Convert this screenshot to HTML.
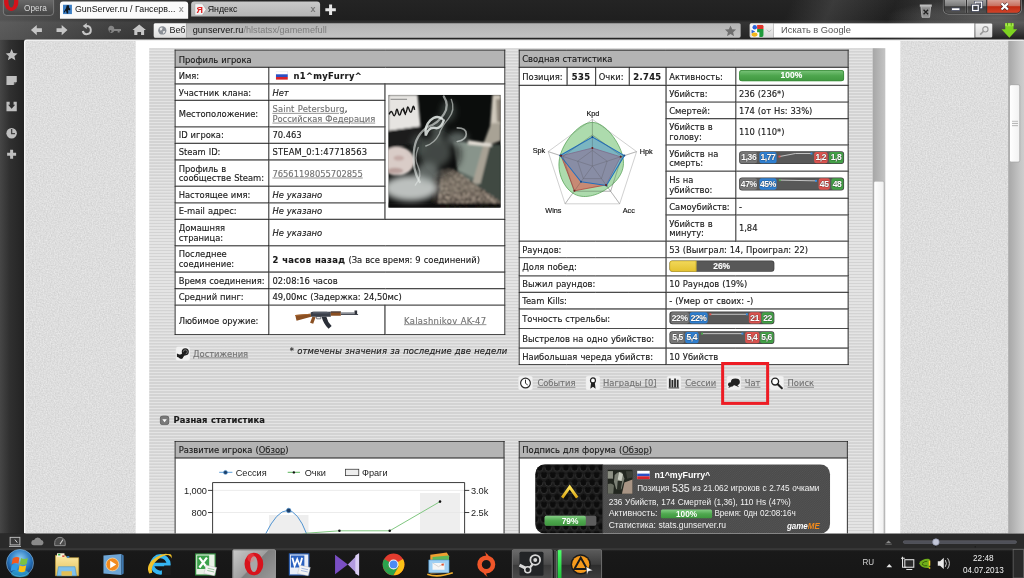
<!DOCTYPE html>
<html lang="ru">
<head>
<meta charset="utf-8">
<title>GunServer.ru / Гансервер</title>
<style>
html,body{margin:0;padding:0;width:1024px;height:578px;overflow:hidden;background:#1b1b1b;}
#root{position:absolute;left:0;top:0;width:1366px;height:768px;transform:scale(0.74963,0.7526);transform-origin:0 0;overflow:hidden;
  font-family:"Liberation Sans",sans-serif;color:#222;background:#1d1d1d;}
#root *{box-sizing:border-box;}
.abs{position:absolute;}
/* ---------- browser chrome ---------- */
#chrome{left:0;top:0;width:1366px;height:54px;background:radial-gradient(ellipse 150px 26px at 1330px 24px,rgba(150,150,150,.55),rgba(0,0,0,0)),linear-gradient(90deg,rgba(120,120,120,.6) 0,rgba(90,90,90,.4) 150px,rgba(0,0,0,0) 340px),linear-gradient(115deg,rgba(0,0,0,0) 0,rgba(0,0,0,0) 76%,rgba(120,120,120,.28) 80%,rgba(0,0,0,0) 86%,rgba(120,120,120,.2) 90%,rgba(0,0,0,0) 95%),linear-gradient(#242424 0,#1f1f1f 26px,#343434 30px,#242424 53px);}
#operabtn{left:4px;top:-2px;width:68px;height:23px;border:1px solid #8a8a8a;border-radius:0 0 5px 5px;background:linear-gradient(#6a6a6a,#444);color:#d8d8d8;font-size:11px;line-height:23px;padding-left:27px;}
.tab{top:1.700px;height:22px;border-radius:4px 4px 0 0;font-size:11.800px;line-height:20px;color:#111;white-space:nowrap;overflow:hidden;}
#tab1{left:80px;width:171px;background:#fbfbfb;padding-left:20px;height:23.300px;}
#tab2{left:255px;width:172px;background:linear-gradient(#c9c9c9,#b3b3b3);padding-left:22px;height:20px;line-height:20px;}
.tabx{right:6px;top:0;color:#999;font-size:12px;font-weight:bold;}
#addr{left:205px;top:31px;width:783px;height:19px;background:linear-gradient(#b4b4b4,#c3c3c3);border-radius:2px;font-size:12px;line-height:18px;white-space:nowrap;}
#web{left:0;top:0;width:44px;height:19px;background:linear-gradient(#fafafa,#dedede);border-radius:2px 0 0 2px;border-right:1px solid #999;padding-left:21px;color:#222;}
#search{left:1031.500px;top:31px;width:268.500px;height:19px;background:#fff;font-size:12.400px;line-height:18px;color:#555;padding-left:10.500px;}
#gbox{left:999.500px;top:31px;width:32px;height:19px;background:linear-gradient(#f4f4f4,#d8d8d8);border-radius:2px 0 0 2px;}
#sbtn{left:1300px;top:31px;width:24px;height:19px;background:linear-gradient(#f4f4f4,#d4d4d4);border-left:1px solid #aaa;border-radius:0 2px 2px 0;}
#winctl{left:1259px;top:-2px;width:103px;height:19.500px;border:1px solid #1e1e1e;border-radius:0 0 6px 6px;overflow:hidden;box-shadow:0 0 0 1.200px rgba(200,200,200,.5);}
#winctl div{position:absolute;top:0;height:18.500px;}
/* ---------- sidebar ---------- */
#side{left:0;top:53px;width:33px;height:656px;background:linear-gradient(90deg,#464646 0,#303030 13px,#222 33px);}
/* ---------- page ---------- */
#page{left:31.500px;top:52px;width:1335px;height:657px;background:#dedede;border-top:2px solid #f6f6f6;border-left:2px solid #f6f6f6;overflow:hidden;border-radius:4px 3px 0 0;}
#col{left:147.500px;top:0;width:1020px;height:660px;background:#fff;}
#stripes{left:18px;top:10px;width:965px;height:660px;background:repeating-linear-gradient(#d3d3d3 0,#d3d3d3 1.6px,#e4e4e4 2px,#e4e4e4 3.6px,#d3d3d3 4px);}
#isb{left:983px;top:10px;width:17px;height:660px;background:linear-gradient(90deg,#a6a6a6,#c4c4c4);}
#isbthumb{left:1px;top:176px;width:15px;height:500px;background:linear-gradient(90deg,#fff,#f0f0f0);border:1px solid #b0b0b0;border-radius:3px;}
#osb{left:1311.500px;top:0;width:22px;height:660px;background:linear-gradient(90deg,#a6a6a6,#c6c6c6 16px,#cfcfcf 22px);}
#osbthumb{left:1px;top:58px;width:15px;height:104px;background:linear-gradient(90deg,#fff,#f2f2f2);border:1px solid #aaa;border-radius:3px;}
/* ---------- content ---------- */
#content{font-family:"DejaVu Sans","Liberation Sans",sans-serif;font-size:11.2px;line-height:13px;color:#1a1a1a;letter-spacing:-0.03px;word-spacing:.5px;-webkit-text-stroke-width:.18px;}
table.t{position:absolute;border-collapse:collapse;table-layout:fixed;background:#fff;}
table.t td{border:1px solid #111;box-shadow:inset 0 0 0 .3px #333;padding:2px 4px 0 4px;vertical-align:middle;overflow:hidden;}
table.t td.bc{padding:0 4px 1px 4px;}
table.t td.h{background:#b4b4b4;height:23px;padding-top:3.500px;}
a{color:#737373;text-decoration:underline;}
i{font-style:italic;}
#content b{letter-spacing:.45px;}
.bar{position:relative;width:140px;height:16px;border-radius:4px;background:#585858;overflow:hidden;color:#fff;font:bold 11.3px/15px "Liberation Sans",sans-serif;text-align:center;box-shadow:inset 0 0 0 1px rgba(0,0,0,.25);}
.bar span{position:absolute;top:1px;height:14px;border-radius:3px;text-align:center;letter-spacing:-0.5px;text-shadow:0 0 1.5px rgba(0,0,0,.9),0 0 1px rgba(0,0,0,.6);}
.g{background:#777;}.b{background:#2f7fd0;}.r{background:#d9534f;}.gr{background:#43a047;}
.lnk{position:absolute;white-space:nowrap;}
/* ---------- status + taskbar ---------- */
#status{left:0;top:709px;width:1366px;height:20px;background:#2a2a2a;}
#task{left:0;top:729px;width:1366px;height:39px;background:linear-gradient(#2c2c2c 0,#191919 3px,#161616 100%);border-top:1px solid #555;}
</style>
</head>
<body>
<div id="root">

<!-- ======================= BROWSER CHROME ======================= -->
<div id="chrome" class="abs">
  <div id="operabtn" class="abs">Opera</div>
  <svg class="abs" style="left:5px;top:0" width="20" height="19" viewBox="0 0 20 19"><ellipse cx="10" cy="2.5" rx="9.6" ry="12" fill="#d3121a"/><ellipse cx="10" cy="1.5" rx="3.8" ry="8.5" fill="#4a4a4a"/></svg>
  <div id="tab1" class="tab abs">GunServer.ru / Гансерв...<span class="tabx abs">x</span></div>
  <svg class="abs" style="left:84px;top:6px" width="12" height="13" viewBox="0 0 12 13"><rect width="12" height="13" fill="#3d7fc4"/><path d="M5 1h3v3l2 2-1 2-2-1v5h-2l-1-4-2 3-1-1 3-5z" fill="#101820"/></svg>
  <div id="tab2" class="tab abs">Яндекс<span class="tabx abs" style="color:#777">x</span></div>
  <svg class="abs" style="left:259px;top:5px" width="17" height="15" viewBox="0 0 17 15"><path d="M1 0h10l5 7.5-5 7.5H1z" fill="#f4f4f4" stroke="#999" stroke-width=".6"/><text x="3" y="12" font-family="Liberation Sans, sans-serif" font-weight="bold" font-size="12" fill="#e02020">Я</text></svg>
  <svg class="abs" style="left:432px;top:4px" width="18" height="18" viewBox="0 0 18 18"><path d="M9 2v14M2 9h14" stroke="#e6e6e6" stroke-width="4"/></svg>
  <!-- nav buttons -->
  <svg class="abs" style="left:34px;top:29px" width="170" height="22" viewBox="0 0 170 22">
    <g fill="#c6c6c6" stroke="none">
      <g transform="translate(14.6 11) scale(.86) translate(-14.5 -11)"><path d="M6 11l9-8v5h8v6h-8v5z"/></g>
      <g transform="translate(48.7 11) scale(.86) translate(-49.5 -11)"><path d="M58 11l-9-8v5h-8v6h8v5z"/></g>
      <g transform="translate(81.7 11) scale(.9) translate(-82 -11)"><path d="M82 3.5a7.500 7.500 0 1 1-7.300 9.200l3-.7a4.500 4.500 0 1 0 4.300-5.500v3l-6-4.500 6-4.500z"/></g>
      <g transform="translate(117 11) scale(.9) translate(-117 -11)"><path d="M110 11a4.500 4.500 0 1 1 8.600-1.500h10v3h-2v2h-3v-2h-5a4.500 4.500 0 0 1-8.600-1.500zm3 0a1.500 1.500 0 1 0 .01 0z" fill="#858585"/></g>
      <g transform="translate(151.7 11) scale(.82) translate(-151 -11)"><path d="M151 2l11 9h-3v8h-5v-5h-6v5h-5v-8h-3z"/></g>
    </g>
  </svg>
  <div id="addr" class="abs">
    <div id="web" class="abs">Веб</div>
    <svg class="abs" style="left:5px;top:3px" width="13" height="13" viewBox="0 0 13 13"><circle cx="6.500" cy="6.500" r="5.500" fill="#8a8f96"/><path d="M3 4q2-2 4-1l-1 3-2 1zM7 8l3-1 0 2-2 2z" fill="#e8e8e8"/></svg>
    <span class="abs" style="left:52px;top:0;color:#151515;font-size:12.200px">gunserver.ru<span style="color:#7d7d7d">/hlstatsx/gamemefull</span></span>
    <svg class="abs" style="left:762px;top:3px" width="15" height="14" viewBox="0 0 17 16"><path d="M8.500 0l2.500 5.500 6 .6-4.500 4 1.300 5.900-5.300-3.100-5.300 3.100 1.300-5.900-4.500-4 6-.6z" fill="#6f6f6f"/></svg>
  </div>
  <div id="gbox" class="abs">
    <svg class="abs" style="left:2.500px;top:1.500px" width="29" height="16" viewBox="0 0 29 16"><rect width="16.500" height="16" rx="1.500" fill="#fdfdfd"/><circle cx="4.800" cy="3.200" r="3" fill="#2a62d9"/><path d="M.5 6.500l5 2.500-5 2.500z" fill="#2a62d9"/><path d="M8 0h6.500a2 2 0 0 1 2 2v3.500H8z" fill="#e0342a"/><path d="M8 5.500h8.500V14a2 2 0 0 1-2 2H11V10H8z" fill="#1f9b3c"/><ellipse cx="4.500" cy="13" rx="4" ry="2.800" fill="#f2b71c"/><path d="M21 6.500l3 3 3-3" stroke="#b5b5b5" stroke-width="1.200" fill="none"/></svg>
  </div>
  <div id="search" class="abs">Искать в Google</div>
  <div id="sbtn" class="abs"><svg class="abs" style="left:5px;top:3px" width="14" height="14" viewBox="0 0 14 14"><circle cx="8.500" cy="5" r="3.500" fill="none" stroke="#9a9a9a" stroke-width="1.600"/><path d="M6 7.500L1.500 12" stroke="#9a9a9a" stroke-width="2.200"/></svg></div>
  <svg class="abs" style="left:1335px;top:29px" width="23" height="22" viewBox="0 0 23 22"><path d="M6 2h11v8h5L11.500 21 1 10h5z" fill="#7ed321"/><path d="M6 2h11v4H6z" fill="#a6e84a"/><path d="M9 1v4M14 1v4" stroke="#3f8a00" stroke-width="1"/></svg>
  <!-- trash -->
  <svg class="abs" style="left:1225px;top:3px" width="20" height="21" viewBox="0 0 20 21"><path d="M2 3h16v3H2z" fill="#bdbdbd"/><path d="M3.500 6h13l-1.500 14h-10z" fill="#8e8e8e" stroke="#c4c4c4"/><path d="M7 10l6 6M13 10l-6 6" stroke="#222" stroke-width="1.800"/></svg>
  <div id="winctl" class="abs">
    <div style="left:0;width:30px;background:linear-gradient(#a4a4a4,#7a7a7a 46%,#3c3c3c 52%,#555 100%);border-right:1px solid #2a2a2a;box-shadow:inset -1px 0 0 rgba(255,255,255,.25)"></div>
    <div style="left:30px;width:27px;background:linear-gradient(#a4a4a4,#7a7a7a 46%,#3c3c3c 52%,#555 100%);border-right:1px solid #2a2a2a;box-shadow:inset 1px 0 0 rgba(255,255,255,.25)"></div>
    <div style="left:57px;width:48px;background:linear-gradient(#d9a79c,#c9705f 46%,#c02a12 52%,#d4472c 100%)"></div>
    <svg class="abs" style="left:0;top:0" width="105" height="19" viewBox="0 0 105 19"><rect x="9.500" y="11.500" width="11" height="3.600" fill="#fff" stroke="#3a3f55" stroke-width="1"/><rect x="37.500" y="8" width="7.500" height="7" fill="none" stroke="#3a3f55" stroke-width="3.400"/><rect x="37.500" y="8" width="7.500" height="7" fill="none" stroke="#fff" stroke-width="1.600"/><path d="M41 5.500V3.800h8.500v7.500h-2" fill="none" stroke="#3a3f55" stroke-width="3.200"/><path d="M41 5.500V3.800h8.500v7.500h-2" fill="none" stroke="#fff" stroke-width="1.500"/><path d="M76 5.500l8.500 8M84.500 5.500l-8.500 8" stroke="#4a2a2a" stroke-width="4.600"/><path d="M76 5.500l8.500 8M84.500 5.500l-8.500 8" stroke="#fff" stroke-width="2.800"/></svg>
  </div>
</div>

<!-- ======================= SIDEBAR ======================= -->
<div id="side" class="abs">
  <svg class="abs" style="left:4px;top:8px" width="24" height="160" viewBox="0 0 24 160" fill="#bfbfbf">
    <g transform="translate(11.500 12) scale(.86) translate(-11.500 -12)"><path d="M11.500 3l2.700 6 6.500.6-4.900 4.300 1.500 6.400-5.800-3.400-5.800 3.400 1.500-6.400L2.300 9.600l6.500-.6z"/></g>
    <g transform="translate(11.500 46) scale(.86) translate(-11.500 -46)"><path d="M3.500 39h16v9l-5 5h-11z"/><path d="M15 48.500h4l-4 4z" fill="#555"/></g>
    <g transform="translate(11.500 80.500) scale(.86) translate(-11.500 -80.500)"><path d="M3.500 73h5v5h-2.500l5.500 6 5.500-6h-2.500v-5h5v15h-16z"/></g>
    <circle cx="11.500" cy="116" r="7"/><path d="M11.500 110.500v6h4.500" stroke="#444" stroke-width="1.800" fill="none"/>
    <path d="M11.500 138v12M5.500 144h12" stroke="#bfbfbf" stroke-width="4"/>
  </svg>
</div>

<!-- ======================= PAGE ======================= -->
<div id="page" class="abs">
  <svg class="abs" style="left:0;top:0" width="1335" height="660"><filter id="nz" x="0" y="0" width="100%" height="100%" color-interpolation-filters="sRGB"><feTurbulence type="fractalNoise" baseFrequency="0.55" numOctaves="2" seed="3"/><feColorMatrix type="matrix" values=".14 0 0 0 .797  .14 0 0 0 .797  .14 0 0 0 .797  0 0 0 0 1"/></filter><rect width="1335" height="660" fill="#e0e0e0"/><rect width="1335" height="660" filter="url(#nz)"/></svg>
  <div id="col" class="abs">
    <div id="stripes" class="abs"></div>
    <div id="isb" class="abs"><div id="isbthumb" class="abs"></div></div>
    <div id="content" class="abs" style="left:0;top:0;width:1020px;height:660px">
<!--CONTENT-START-->
<table class="t" style="left:52.4px;top:12.4px;width:440px">
<colgroup><col style="width:125px"><col style="width:155px"><col style="width:160px"></colgroup>
<tr><td class="h" colspan="3">Профиль игрока</td></tr>
<tr style="height:22px"><td>Имя:</td><td colspan="2" style="padding-left:9px"><svg width="16" height="11" viewBox="0 0 16 11" style="vertical-align:-1px;margin-right:7px"><rect width="16" height="11" fill="#fff" stroke="#bbb" stroke-width=".5"/><rect y="3.7" width="16" height="3.7" fill="#2a4fc4"/><rect y="7.3" width="16" height="3.7" fill="#d8232a"/></svg><b>n1^myFurry^</b></td></tr>
<tr style="height:22px"><td>Участник клана:</td><td><i>Нет</i></td><td rowspan="7" style="padding:0;text-align:center"><svg id="avatar" width="150" height="150" viewBox="0 0 150 150" style="display:block;margin:0 auto 2.200px 4px">
<defs>
<filter id="bl2" x="-20%" y="-20%" width="140%" height="140%"><feGaussianBlur stdDeviation="1.600"/></filter>
<filter id="bl4" x="-30%" y="-30%" width="160%" height="160%"><feGaussianBlur stdDeviation="4"/></filter>
<filter id="bl1" x="-20%" y="-20%" width="140%" height="140%"><feGaussianBlur stdDeviation="1"/></filter>
<clipPath id="avc"><rect width="150" height="150"/></clipPath>
<filter id="tatf" x="0" y="0" width="100%" height="100%" color-interpolation-filters="sRGB"><feTurbulence type="fractalNoise" baseFrequency=".34" numOctaves="2" seed="7" result="n"/><feColorMatrix in="n" type="matrix" values="1.3 0 0 0 -.2  1.2 0 0 0 -.19  1.1 0 0 0 -.18  0 0 0 0 1" result="c"/><feComposite in="c" in2="SourceGraphic" operator="in"/></filter>
</defs>
<g clip-path="url(#avc)">
<rect width="150" height="150" fill="#0b0d0c"/>
<g filter="url(#bl2)">
<!-- right wall -->
<path d="M92 62l58 6v82h-32L92 100z" fill="#5f6b63"/>
<path d="M86 62l44 4-12 46-26-12z" fill="#88948b"/>
<path d="M130 66h20v84h-24l-6-34z" fill="#3f4843"/>
<!-- beige door frame -->
<path d="M139 0h11v40l-14 1z" fill="#cfc8bb"/>
<path d="M144 6h6v30h-5z" fill="#8d8579"/>
<path d="M137 38l13-1v24l-14 5-13 52h-11l16-56z" fill="#a8a295"/>
<path d="M106 60l32 5v4l-32-3z" fill="#e2ddd4"/>
<!-- card -->
<path d="M0 0h39l4 42L0 48z" fill="#e6e4e1"/>
<!-- hat band -->
<path d="M0 48l43-6 3 20L0 72z" fill="#1b1e1d"/>
<!-- face -->
<ellipse cx="12" cy="88" rx="23" ry="19" fill="#d9ccc7"/>
<ellipse cx="9" cy="101" rx="11" ry="4" fill="#b9a09c"/>
<ellipse cx="14" cy="84" rx="7" ry="3.500" fill="#c4aca7"/>
<!-- arm -->
<path d="M62 106q10-12 24-8l64 44v8H60z" fill="#6d655b" filter="url(#tatf)"/>
<path d="M66 104q10-8 20-4l40 26-56 6z" fill="#8a8074" opacity=".45"/>
<path d="M58 150l2-40q4-10 10-8l-4 48z" fill="#1a1816" opacity=".8"/>
<path d="M0 144h150v6H0z" fill="#0d0d0d"/>
</g>
<!-- dark hair / hand mass -->
<path d="M46 54q20-14 38 0t12 34q-8 18-30 22-18-10-22-30z" fill="#0e1110" opacity=".6" filter="url(#bl4)"/>
<!-- smoke puffs -->
<g filter="url(#bl4)">
<ellipse cx="30" cy="124" rx="36" ry="17" fill="#cfd4d1" opacity=".9"/>
<ellipse cx="52" cy="104" rx="16" ry="14" fill="#9aa39e" opacity=".6"/>
<ellipse cx="62" cy="76" rx="22" ry="20" fill="#6d7873" opacity=".55"/>
<ellipse cx="40" cy="66" rx="10" ry="14" fill="#59635f" opacity=".5"/>
<ellipse cx="92" cy="58" rx="14" ry="9" fill="#8e9a94" opacity=".6"/>
<ellipse cx="66" cy="46" rx="9" ry="16" fill="#7f8b86" opacity=".5"/>
<ellipse cx="80" cy="22" rx="10" ry="14" fill="#56605c" opacity=".55"/>
</g>
<!-- smoke wisps -->
<g fill="none" stroke="#e9eeeb" stroke-linecap="round" filter="url(#bl1)">
<path d="M74 2q8 12 0 24t-20 16q-18 10-20 34t8 40" stroke-width="3" opacity=".6"/>
<path d="M84 6q6 14-4 26t-12 20q-6 12-18 16" stroke-width="1.800" opacity=".55"/>
<path d="M72 32q-8-6-16 2t-6 20q4-12 12-10t12-10" stroke-width="3.200" opacity=".85"/>
<path d="M92 44q12 0 12 8t-12 10" stroke-width="2.200" opacity=".6"/>
<path d="M40 70q-6 14 0 26t-4 24" stroke-width="1.800" opacity=".5"/>
</g>
<!-- handwriting on card -->
<g filter="url(#bl1)">
<path d="M1 26q3-7 5-1t4-1q1-9 3-1t4 0q2-7 4-1t4-3q1-6 3 1t4-1 3 1" fill="none" stroke="#151515" stroke-width="1.900"/>
<path d="M20 17l3 10" stroke="#151515" stroke-width="1.600"/>
<path d="M3 6h22" stroke="#777" stroke-width="1.600" opacity=".7"/>
</g>
</g>
</svg></td></tr>
<tr style="height:35px"><td>Местоположение:</td><td><a style="letter-spacing:.2px">Saint Petersburg</a>, <a>Российская Федерация</a></td></tr>
<tr style="height:22px"><td>ID игрока:</td><td>70.463</td></tr>
<tr style="height:22px"><td>Steam ID:</td><td style="letter-spacing:.22px">STEAM_0:1:47718563</td></tr>
<tr style="height:35px"><td>Профиль в сообществе Steam:</td><td><a>76561198055702855</a></td></tr>
<tr style="height:22px"><td>Настоящее имя:</td><td><i>Не указано</i></td></tr>
<tr style="height:22px"><td>E-mail адрес:</td><td><i>Не указано</i></td></tr>
<tr style="height:35px"><td>Домашняя страница:</td><td colspan="2"><i>Не указано</i></td></tr>
<tr style="height:35px"><td>Последнее соединение:</td><td colspan="2"><b>2 часов назад</b> (За все время: 9 соединений)</td></tr>
<tr style="height:22px"><td>Время соединения:</td><td colspan="2">02:08:16 часов</td></tr>
<tr style="height:22px"><td>Средний пинг:</td><td colspan="2">49,00мс (Задержка: 24,50мс)</td></tr>
<tr style="height:39px"><td>Любимое оружие:</td><td style="padding:0;text-align:center"><svg width="90" height="30" viewBox="0 0 90 30" style="display:block;margin:0 auto">
<path d="M2.800 8.500L23.300 6.800l.8 4L4.600 16.300z" fill="#8a4f22"/>
<path d="M2.800 8.500L23.300 6.800l.2 1.200L3.100 9.900z" fill="#a8652f"/>
<path d="M23.300 5.500q1-1.300 3-1.300h24v6.600H24z" fill="#3a3f4a"/>
<path d="M27 4.200h18l4 1.300v1.200H26z" fill="#565c68"/>
<path d="M25.700 10.800l4.300.6-3.200 8.800-4.100-1.200z" fill="#8a4f22"/>
<path d="M30.500 10.800h6.500v2.800h-5.500z" fill="none" stroke="#3a3f4a" stroke-width=".9"/>
<path d="M38 10.800h6.400q1.500 7 7 12.300l-4.100 3.700q-6.800-6.500-9.300-16z" fill="#2b2f38"/>
<path d="M50.300 3.800h13.400v5.900H50.300z" fill="#8a4f22"/>
<path d="M50.300 3.800h13.400v1.500H50.300z" fill="#3a3f4a"/>
<path d="M63.700 5h18.200v2.300H63.700z" fill="#8b8f96"/>
<path d="M63.700 7.300h23v1.200h-23z" fill="#4a4e57"/>
<path d="M81.900 2.700h3.500v5.200h-3.500z" fill="#2f333b"/>
</svg></td><td style="text-align:center"><a style="letter-spacing:.42px">Kalashnikov AK-47</a></td></tr>
</table>

<div class="lnk" style="left:52.500px;top:405.800px"><svg width="20" height="20" viewBox="0 0 20 20" style="vertical-align:-6px;margin-right:4px"><rect x=".3" y=".3" width="19.400" height="19.400" rx="3.500" fill="#f1f1f1" stroke="#dcdcdc" stroke-width=".6"/><circle cx="13.200" cy="7.500" r="4.700" fill="#1e1e1e"/><circle cx="13.200" cy="7.500" r="2.700" fill="none" stroke="#9a9a9a" stroke-width="1"/><circle cx="7.600" cy="13.800" r="3.100" fill="#1e1e1e"/><path d="M2 9.800l6 2.600-1.500 3.600L2 14z" fill="#1e1e1e"/><path d="M7.500 11l3.500-3.500 3.500 3-4.500 4z" fill="#1e1e1e"/></svg><a>Достижения</a></div>
<div class="lnk" style="left:205.700px;top:407px;letter-spacing:.14px"><i>* отмечены значения за последние две недели</i></div>

<table class="t" style="left:510.7px;top:11.9px;width:439px">
<colgroup><col style="width:64px"><col style="width:38px"><col style="width:45px"><col style="width:49px"><col style="width:93px"><col style="width:150px"></colgroup>
<tr><td class="h" colspan="6">Сводная статистика</td></tr>
<tr style="height:24px"><td>Позиция:</td><td style="text-align:center;padding:2px 0 0"><b>535</b></td><td>Очки:</td><td style="text-align:center;padding:2px 0 0"><b>2.745</b></td><td>Активность:</td><td class="bc"><div class="bar pg" style="height:15px;line-height:14px;background:linear-gradient(#7cc67c,#4ea64e 50%,#3f973f);box-shadow:inset 0 0 0 1px #3a8a3a">100%</div></td></tr>
<tr style="height:22px"><td colspan="4" rowspan="7" style="padding:0"><svg width="195" height="206" viewBox="0 0 146.2 155" style="display:block">
<g fill="none" stroke="#b0b0b0" stroke-width=".6">
<polygon points="72.9,33.5 117.3,65.8 100.3,118.0 45.5,118.0 28.5,65.8"/>
<polygon points="72.9,49.1 102.5,70.6 91.2,105.4 54.6,105.4 43.3,70.6"/>
<polygon points="72.9,64.6 87.7,75.4 82.0,92.8 63.8,92.8 58.1,75.4"/>
<path d="M72.9 80.2 L72.9 33.5"/>
<path d="M72.9 80.2 L117.3 65.8"/>
<path d="M72.9 80.2 L100.3 118.0"/>
<path d="M72.9 80.2 L45.5 118.0"/>
<path d="M72.9 80.2 L28.5 65.8"/>
</g>
<path d="M72.9 36.6C86.1 36.7 100.0 56.6 103.3 70.3C106.7 84.1 99.3 94.3 88.8 102.0C78.2 109.8 63.3 114.1 53.2 107.3C43.1 100.5 36.4 84.5 40.6 69.7C44.7 54.8 59.7 36.5 72.9 36.6z" fill="#5cb85c" fill-opacity=".5" stroke="#4a9a4a" stroke-width=".7"/>
<polygon points="72.9,62.2 101.3,71.0 86.6,99.1 54.9,105.0 41.5,70.0" fill="#d9534f" fill-opacity=".6" stroke="#b03a36" stroke-width=".7"/>
<polygon points="72.9,51.2 105.0,69.8 87.0,99.6 61.5,95.9 40.6,69.7" fill="#4a8fd6" fill-opacity=".5" stroke="#1f6fbf" stroke-width="1"/>
<g fill="none" stroke="#555" stroke-opacity=".45" stroke-width=".5">
<polygon points="72.9,49.1 102.5,70.6 91.2,105.4 54.6,105.4 43.3,70.6"/>
<polygon points="72.9,64.6 87.7,75.4 82.0,92.8 63.8,92.8 58.1,75.4"/>
<path d="M72.9 80.2 L72.9 33.5"/>
<path d="M72.9 80.2 L117.3 65.8"/>
<path d="M72.9 80.2 L100.3 118.0"/>
<path d="M72.9 80.2 L45.5 118.0"/>
<path d="M72.9 80.2 L28.5 65.8"/>
</g>
<circle cx="72.9" cy="51.2" r="1" fill="#174a86"/>
<circle cx="105.0" cy="69.8" r="1" fill="#174a86"/>
<circle cx="87.0" cy="99.6" r="1" fill="#174a86"/>
<circle cx="61.5" cy="95.9" r="1" fill="#174a86"/>
<circle cx="40.6" cy="69.7" r="1" fill="#174a86"/>
<circle cx="72.9" cy="62.2" r="1" fill="#6a1f1c"/>
<circle cx="101.3" cy="71.0" r="1" fill="#6a1f1c"/>
<circle cx="86.6" cy="99.1" r="1" fill="#6a1f1c"/>
<circle cx="54.9" cy="105.0" r="1" fill="#6a1f1c"/>
<circle cx="41.5" cy="70.0" r="1" fill="#6a1f1c"/>
<g font-family="Liberation Sans, sans-serif" font-size="7.3" fill="#111" stroke="#111" stroke-width=".15" text-anchor="middle">
<text x="73.4" y="30.4">Kpd</text>
<text x="126.8" y="67.7">Hpk</text>
<text x="109.4" y="126.7">Acc</text>
<text x="33.7" y="126.7">Wins</text>
<text x="19.2" y="67.3">Spk</text>
</g></svg></td><td>Убийств:</td><td>236 (236*)</td></tr>
<tr style="height:22px"><td>Смертей:</td><td>174 (от Hs: 33%)</td></tr>
<tr style="height:35px"><td>Убийств в голову:</td><td>110 (110*)</td></tr>
<tr style="height:35px"><td>Убийств на смерть:</td><td class="bc"><div class="bar" style="height:17px"><span class="g" style="left:1.6px;width:23.1px;height:15px;line-height:15px">1,36</span><span class="b" style="left:27.0px;width:23.4px;height:15px;line-height:15px">1,77</span><span class="r" style="left:100.0px;width:18.7px;height:15px;line-height:15px">1,2</span><span class="gr" style="left:120.4px;width:18.6px;height:15px;line-height:15px">1,8</span><svg style="position:absolute;left:0;top:0" width="140" height="17"><polyline points="53.8,7.0 75.0,3.0 96.5,3.0" fill="none" stroke="#cfcfcf" stroke-width="1.2"/><rect x="52.5" y="5.7" width="2.6" height="2.6" fill="#e0524e"/><rect x="95.2" y="1.7" width="2.6" height="2.6" fill="#3a8de0"/></svg></div></td></tr>
<tr style="height:35px"><td>Hs на убийство:</td><td class="bc"><div class="bar" style="height:17px"><span class="g" style="left:1.6px;width:23.1px;height:15px;line-height:15px">47%</span><span class="b" style="left:27.0px;width:23.4px;height:15px;line-height:15px">45%</span><span class="r" style="left:106.0px;width:15.4px;height:15px;line-height:15px">45</span><span class="gr" style="left:123.0px;width:16.0px;height:15px;line-height:15px">48</span><svg style="position:absolute;left:0;top:0" width="140" height="17"><polyline points="54.3,3.3  102.5,4.3" fill="none" stroke="#cfcfcf" stroke-width="1.2"/><rect x="53.0" y="2.0" width="2.6" height="2.6" fill="#4cae4c"/><rect x="101.2" y="3.0" width="2.6" height="2.6" fill="#3a8de0"/></svg></div></td></tr>
<tr style="height:22px"><td>Самоубийств:</td><td>-</td></tr>
<tr style="height:35px"><td>Убийств в минуту:</td><td>1,84</td></tr>
<tr style="height:22px"><td colspan="4">Раундов:</td><td colspan="2">53 (Выиграл: 14, Проиграл: 22)</td></tr>
<tr style="height:24px"><td colspan="4">Доля побед:</td><td colspan="2" class="bc"><div class="bar" style="height:15px;line-height:14px"><span style="left:0;top:0;width:36.4px;height:15px;border-radius:4px 0 0 4px;background:linear-gradient(#f2d95c,#e4c22f);box-shadow:inset 0 0 0 1px #c9a91f"></span>26%</div></td></tr>
<tr style="height:22px"><td colspan="4">Выжил раундов:</td><td colspan="2">10 Раундов (19%)</td></tr>
<tr style="height:22px"><td colspan="4">Team Kills:</td><td colspan="2">- (Умер от своих: -)</td></tr>
<tr style="height:26px"><td colspan="4">Точность стрельбы:</td><td colspan="2" class="bc"><div class="bar" style="height:17px"><span class="g" style="left:2.0px;width:24.0px;height:15px;line-height:15px">22%</span><span class="b" style="left:27.5px;width:23.5px;height:15px;line-height:15px">22%</span><span class="r" style="left:106.0px;width:16.0px;height:15px;line-height:15px">21</span><span class="gr" style="left:123.5px;width:15.5px;height:15px;line-height:15px">22</span><svg style="position:absolute;left:0;top:0" width="140" height="17"><polyline points="54.6,3.6  103.4,3.6" fill="none" stroke="#cfcfcf" stroke-width="1.2"/><rect x="53.3" y="2.3" width="2.6" height="2.6" fill="#e0524e"/><rect x="102.1" y="2.3" width="2.6" height="2.6" fill="#3a8de0"/></svg></div></td></tr>
<tr style="height:26px"><td colspan="4">Выстрелов на одно убийство:</td><td colspan="2" class="bc"><div class="bar" style="height:17px"><span class="g" style="left:1.7px;width:19.0px;height:15px;line-height:15px">5,5</span><span class="b" style="left:21.5px;width:17.5px;height:15px;line-height:15px">5,4</span><span class="r" style="left:101.0px;width:19.0px;height:15px;line-height:15px">5,4</span><span class="gr" style="left:121.0px;width:18.0px;height:15px;line-height:15px">5,6</span><svg style="position:absolute;left:0;top:0" width="140" height="17"><polyline points="43.5,3.3  97.4,3.3" fill="none" stroke="#cfcfcf" stroke-width="1.2"/><rect x="42.2" y="2.0" width="2.6" height="2.6" fill="#4cae4c"/><rect x="96.1" y="2.0" width="2.6" height="2.6" fill="#3a8de0"/></svg></div></td></tr>
<tr style="height:22px"><td colspan="4">Наибольшая череда убийств:</td><td colspan="2">10 Убийств</td></tr>
</table>
<!-- links row -->
<div class="lnk" style="left:509.900px;top:445px"><svg width="20" height="20" viewBox="0 0 20 20" style="vertical-align:-6px;margin-right:6px"><rect x=".3" y=".3" width="19.400" height="19.400" rx="3.500" fill="#f1f1f1" stroke="#dcdcdc" stroke-width=".6"/><circle cx="10" cy="10" r="6.500" fill="#fff" stroke="#2a2a2a" stroke-width="1.600"/><path d="M10 5.500v4.800l3 2.200" fill="none" stroke="#2a2a2a" stroke-width="1.300"/></svg><a>События</a></div>
<div class="lnk" style="left:599.500px;top:445px"><svg width="20" height="20" viewBox="0 0 20 20" style="vertical-align:-6px;margin-right:4px"><rect x=".3" y=".3" width="19.400" height="19.400" rx="3.500" fill="#f1f1f1" stroke="#dcdcdc" stroke-width=".6"/><circle cx="10" cy="6.500" r="3.300" fill="#fff" stroke="#222" stroke-width="1.600"/><path d="M7.500 9.500l-1 8 3.500-2.500 3.500 2.500-1-8z" fill="#222"/></svg><a>Награды [0]</a></div>
<div class="lnk" style="left:708px;top:445px"><svg width="20" height="20" viewBox="0 0 20 20" style="vertical-align:-6px;margin-right:5px"><rect x=".3" y=".3" width="19.400" height="19.400" rx="3.500" fill="#f1f1f1" stroke="#dcdcdc" stroke-width=".6"/><path d="M4.500 4v12M8 6v10M11.500 4v12M15 5.500V16" stroke="#2a2a2a" stroke-width="2.400"/><path d="M3 16.500h14" stroke="#2a2a2a" stroke-width="1.200"/></svg><a>Сессии</a></div>
<div class="lnk" style="left:787.500px;top:445px"><svg width="20" height="20" viewBox="0 0 20 20" style="vertical-align:-6px;margin-right:5px"><rect x=".3" y=".3" width="19.400" height="19.400" rx="3.500" fill="#f1f1f1" stroke="#dcdcdc" stroke-width=".6"/><ellipse cx="12" cy="8.500" rx="6" ry="4.500" fill="#222"/><path d="M14 12l3 3.500-6-2.500z" fill="#222"/><ellipse cx="6" cy="12" rx="3.800" ry="3" fill="#222"/><path d="M4 14l-1.500 2.500 4-1.500z" fill="#222"/></svg><a>Чат</a></div>
<div class="lnk" style="left:844.600px;top:445px"><svg width="20" height="20" viewBox="0 0 20 20" style="vertical-align:-6px;margin-right:5px"><rect x=".3" y=".3" width="19.400" height="19.400" rx="3.500" fill="#f1f1f1" stroke="#dcdcdc" stroke-width=".6"/><circle cx="8" cy="8" r="4.600" fill="#fff" stroke="#222" stroke-width="1.800"/><path d="M11.500 11.500l5.500 5.500" stroke="#222" stroke-width="2.800" stroke-linecap="round"/></svg><a>Поиск</a></div>
<div class="abs" style="left:780.800px;top:427px;width:64px;height:57px;border:4.300px solid #ed1c24"></div>

<!-- heading -->
<div class="lnk" style="left:32px;top:498.200px;font-weight:bold;letter-spacing:.1px"><svg width="13" height="13" viewBox="0 0 13 13" style="vertical-align:-2.500px;margin-right:5.500px"><rect x=".5" y=".5" width="12" height="12" rx="4" fill="#7a7a7a" stroke="#5c5c5c"/><path d="M3.500 5h6l-3 4z" fill="#fff"/></svg>Разная статистика</div>

<!-- bottom tables -->
<table class="t" style="left:52.4px;top:531.7px;width:440px"><tr><td class="h" style="height:22px">Развитие игрока (<a style="color:#222">Обзор</a>)</td></tr><tr style="height:120px"><td></td></tr></table>
<table class="t" style="left:510.7px;top:531.7px;width:439px"><tr><td class="h" style="height:22px">Подпись для форума (<a style="color:#222">Обзор</a>)</td></tr><tr style="height:120px"><td></td></tr></table>

<!-- chart -->
<svg class="abs" style="left:53px;top:556px" width="438" height="100" viewBox="53 556 438 100" font-family="Liberation Sans, sans-serif" font-size="12.300" fill="#222">
  <rect x="177.800" y="630.300" width="52.700" height="30" fill="#eeeeee"/>
  <rect x="379.300" y="601" width="53.300" height="60" fill="#eeeeee"/>
  <path d="M103 597.600H439M103 627H439" stroke="#e6e6e6" stroke-width="1"/>
  <path d="M102.600 587.200H438.800V660H102.600z" fill="none" stroke="#111" stroke-width="1.100"/>
  <path d="M96.500 597.600h6M96.500 627h6M439 597.600h6M439 627h6" stroke="#111" stroke-width="1.100"/>
  <path d="M173 656Q204.100 592.600 228.300 656" fill="none" stroke="#4a90d0" stroke-width="1.300"/>
  <circle cx="204.100" cy="624.300" r="3" fill="#1f3f66" stroke="#4a90d0" stroke-width=".8"/>
  <path d="M204.500 660L228 654.500 271.800 651.300H338.900L406 612.500" fill="none" stroke="#7cc47c" stroke-width="1.300"/>
  <circle cx="271.800" cy="651.300" r="1.700" fill="#111"/><circle cx="338.900" cy="651.300" r="1.700" fill="#111"/><circle cx="406" cy="612.500" r="1.700" fill="#111"/>
  <path d="M111.400 573.700H129" stroke="#7fb2e0" stroke-width="1.500"/><circle cx="119.800" cy="573.700" r="2.600" fill="#1f3f66" stroke="#4a90d0" stroke-width=".8"/>
  <text x="133.400" y="578">Сессия</text>
  <path d="M202.800 573.700H219.200" stroke="#7cc47c" stroke-width="1.500"/><circle cx="211" cy="573.700" r="1.600" fill="#111"/>
  <text x="225.500" y="578">Очки</text>
  <rect x="279.800" y="569.500" width="17.800" height="8.500" fill="#eeeeee" stroke="#333" stroke-width="1"/>
  <text x="301.800" y="578">Фраги</text>
  <text x="95" y="602" text-anchor="end">1,000</text>
  <text x="95" y="631.400" text-anchor="end">800</text>
  <text x="447.300" y="602">3.0k</text>
  <text x="447.300" y="631.400">2.5k</text>
</svg>

<!-- forum signature -->
<svg class="abs" style="left:533.300px;top:562.500px" width="394" height="93" viewBox="0 0 394 93" font-family="Liberation Sans, sans-serif" fill="#f2f2f2">
  <defs>
    <pattern id="hex" width="11.700" height="19.600" patternUnits="userSpaceOnUse"><rect width="11.700" height="19.600" fill="#1b1b1b"/><g fill="#0c0c0c" stroke="#3a3a3a" stroke-width="1"><circle cx="5.850" cy="4.900" r="4.500"/><circle cx="0" cy="14.700" r="4.500"/><circle cx="11.700" cy="14.700" r="4.500"/></g><g fill="none" stroke="#0a0a0a" stroke-width="1.400"><path d="M1.700 3.500a4.500 4.500 0 0 1 8.300 0"/><path d="M-4.150 13.300a4.500 4.500 0 0 1 8.300 0"/><path d="M7.550 13.300a4.500 4.500 0 0 1 8.300 0"/></g></pattern>
    <pattern id="hat" width="3" height="3" patternUnits="userSpaceOnUse"><rect width="3" height="3" fill="#4b4b4b"/><path d="M0 3L3 0" stroke="#585858" stroke-width=".8"/></pattern>
    <clipPath id="sigc"><rect width="393.300" height="92" rx="13" ry="13"/></clipPath>
    <linearGradient id="gbar" x1="0" y1="0" x2="0" y2="1"><stop offset="0" stop-color="#86cf86"/><stop offset=".5" stop-color="#4fa84f"/><stop offset="1" stop-color="#3d963d"/></linearGradient>
    <linearGradient id="ylw" x1="0" y1="0" x2="0" y2="1"><stop offset="0" stop-color="#ffe45a"/><stop offset="1" stop-color="#d9a514"/></linearGradient>
  </defs>
  <g clip-path="url(#sigc)">
    <rect width="394" height="93" fill="url(#hat)"/>
    <rect width="90" height="93" fill="url(#hex)"/>
    <path d="M90 0v93" stroke="#3a3a3a" stroke-width="1"/>
    <path d="M36 44.300L46 30.200 56 44.300" fill="none" stroke="url(#ylw)" stroke-width="3.800" stroke-linejoin="miter"/>
    <rect x="12.500" y="68.200" width="69.100" height="13.300" rx="2.500" fill="#5d5d5d"/>
    <rect x="12.500" y="68.200" width="55" height="13.300" rx="2.500" fill="url(#gbar)"/>
    <text x="46.500" y="79" font-size="11.200" font-weight="bold" text-anchor="middle" fill="#fff">79%</text>
    <!-- mini avatar -->
    <rect x="96.700" y="7.200" width="33" height="32" fill="#22261f"/>
    <g filter="url(#bl1)"><path d="M96.700 9h7v10h-7z" fill="#8d9084"/><path d="M106 14q5-6 10-3l3 8-4 14h-7l-3-10z" fill="#7c8074"/><path d="M112 10l5 3-2 9-5-2z" fill="#c9ccc0"/><path d="M110 22h6l-2 12h-5z" fill="#2a2e28"/><path d="M119 24l10.700-4v19.200h-14z" fill="#a89484"/><path d="M97 26q5-2 8 2l-1 11h-7z" fill="#6a6e62"/><path d="M121 9h8.700v8l-7 2z" fill="#3c4138"/></g>
    <!-- flag -->
    <rect x="136" y="8.600" width="16.700" height="11" fill="#fff"/><rect x="136" y="12.300" width="16.700" height="3.700" fill="#2a4fc4"/><rect x="136" y="15.900" width="16.700" height="3.700" fill="#d8232a"/>
    <text x="159" y="18.500" font-size="12" font-weight="bold" fill="#fff" textLength="74.500" lengthAdjust="spacingAndGlyphs">n1^myFurry^</text>
    <text x="136" y="35.700" font-size="10.800" textLength="243" lengthAdjust="spacingAndGlyphs">Позиция <tspan font-size="14" dy=".7">535</tspan><tspan dy="-.7"> из 21.062 игроков с 2.745 очками</tspan></text>
    <text x="98" y="54.400" font-size="10.800" textLength="243" lengthAdjust="spacingAndGlyphs">236 Убийств, 174 Смертей (1,36), 110 Hs (47%)</text>
    <text x="98" y="69" font-size="10.800" textLength="65" lengthAdjust="spacingAndGlyphs">Активность:</text>
    <rect x="167.700" y="59.900" width="68.200" height="11.800" rx="2" fill="url(#gbar)"/>
    <text x="201.800" y="69.400" font-size="11" font-weight="bold" text-anchor="middle" fill="#fff">100%</text>
    <text x="239" y="69" font-size="10.800" textLength="108.500" lengthAdjust="spacingAndGlyphs">Время: 0дн 02:08:16ч</text>
    <text x="98" y="84.800" font-size="10.800" textLength="156.600" lengthAdjust="spacingAndGlyphs">Статистика: stats.gunserver.ru</text>
    <text x="335.800" y="86" font-size="11.500" font-weight="bold" font-style="italic" fill="#fff" textLength="43.700" lengthAdjust="spacingAndGlyphs">game<tspan fill="#f28a1c">ME</tspan></text>
  </g>
</svg>

<!--CONTENT-END-->
    </div>
  </div>
  <div id="osb" class="abs"><div id="osbthumb" class="abs"><svg class="abs" style="left:3px;top:47px" width="8" height="9"><path d="M0 1h8M0 4h8M0 7h8" stroke="#999"/></svg></div></div>
</div>

<!-- ======================= STATUS BAR ======================= -->
<div id="status" class="abs">
  <svg class="abs" style="left:0;top:1.300px" width="120" height="19" viewBox="0 0 120 19">
    <rect x="13.500" y="4" width="13" height="10" fill="#3a3a3a" stroke="#bdbdbd" stroke-width="1.300"/><path d="M12 16h16" stroke="#bdbdbd" stroke-width="1.300"/><path d="M20 7l3 4" stroke="#ddd" stroke-width="1.300"/>
    <path d="M45 14.500a3.500 3.500 0 0 1 .5-7 5 5 0 0 1 9.500 0 3.600 3.600 0 0 1 .5 7z" fill="#8a8a8a"/>
    <path d="M73 15v-4a7 7 0 0 1 14 0v4z" fill="#4a4a4a" stroke="#8d8d8d" stroke-width="1.300"/><path d="M80 13l4-6" stroke="#c8c8c8" stroke-width="1.400"/>
  </svg>
  <svg class="abs" style="left:1170px;top:.5px" width="196" height="19" viewBox="0 0 196 19">
    <path d="M12 11.500l3.300-3.300 3.300 3.300z" fill="#8a8a8a"/><path d="M11 13h8.600" stroke="#8a8a8a" stroke-width="1"/>
    <rect x="35" y="8.500" width="151" height="3.600" rx="1.800" fill="#4e5058" stroke="#63656d" stroke-width=".8"/>
    <circle cx="78.500" cy="10.300" r="4.300" fill="#c3c7d8" stroke="#9499b0" stroke-width="1"/>
    <path d="M78 15.500v2M131 15.500v2" stroke="#151515" stroke-width="1"/>
  </svg>

</div>

<!-- ======================= TASKBAR ======================= -->
<div id="task" class="abs">
  <!-- active app buttons -->
  <div class="abs" style="left:309.500px;top:0;width:58.500px;height:40px;border:1px solid #bdbdbd;border-radius:2px;background:linear-gradient(135deg,#c9c9c9 0,#9f9f9f 50%,#7e7e7e 51%,#9a9a9a 100%)"></div>
  <div class="abs" style="left:682.500px;top:0;width:54px;height:40px;border:1px solid #8f8f8f;border-radius:2px;background:linear-gradient(#6a6a6a,#4a4a4a 50%,#3a3a3a 51%,#4c4c4c)"></div>
  <div class="abs" style="left:738.500px;top:1px;width:4px;height:38px;border:1px solid #777;border-left:none;border-radius:0 2px 2px 0;background:#3e3e3e"></div>
  <div class="abs" style="left:744px;top:0;width:58.500px;height:40px;border:1px solid #8a8a8a;border-radius:2px;background:linear-gradient(#5a5a5a,#3c3c3c 50%,#2c2c2c 51%,#3e3e3e)"></div>
  <div class="abs" style="left:744px;top:1px;width:4.500px;height:38px;background:linear-gradient(#4dff6a,#1fbf3a)"></div>
  <svg class="abs" style="left:0;top:-1px" width="1366" height="40" viewBox="0 0 1366 40" font-family="Liberation Sans, sans-serif">
    <defs>
      <radialGradient id="orb" cx=".5" cy=".35" r=".7"><stop offset="0" stop-color="#8fd0f5"/><stop offset=".55" stop-color="#2a78c0"/><stop offset="1" stop-color="#0b2f66"/></radialGradient>
      <linearGradient id="fold" x1="0" y1="0" x2="0" y2="1"><stop offset="0" stop-color="#fbe9a5"/><stop offset="1" stop-color="#e3bf55"/></linearGradient>
    </defs>
    <!-- start orb -->
    <circle cx="26.700" cy="19" r="18" fill="url(#orb)" stroke="#9ccbea" stroke-opacity=".6" stroke-width="1.200"/>
    <ellipse cx="26.700" cy="33" rx="12" ry="5" fill="#35c2f0" opacity=".55"/>
    <path d="M17 13q5-3 9-1l-1.500 8q-4-2-9 1z" fill="#f25a1f"/><path d="M28 12.500q4 2.500 9 0l-1.500 8q-4.500 2.500-9 0z" fill="#7cc242"/><path d="M15.500 22.500q5-3 9-1l-1.500 8q-4-2-9 1z" fill="#2f9ae6"/><path d="M26 22q4 2.500 9 0l-1.500 8q-4.500 2.500-9 0z" fill="#fbc013"/>
    <!-- explorer folder -->
    <path d="M74 9h13l3 3h15v24H74z" fill="url(#fold)" stroke="#c9a33a" stroke-width=".8"/><path d="M76 6h10v5H76z" fill="#f7f2d8"/><rect x="77.500" y="7" width="3" height="2" fill="#2db24a"/><rect x="83" y="9" width="3" height="2" fill="#d6453a"/><rect x="89" y="10" width="3.500" height="2" fill="#3a8fe0"/>
    <path d="M78 24h22l2 12H76z" fill="#7fc1ec" stroke="#4a94c8" stroke-width=".8"/><path d="M82 30h14v6H82z" fill="#e3bf55"/>
    <!-- media player -->
    <path d="M138 9l24-2v28l-24-2z" fill="#6fa6d6"/><path d="M162 7l3 2v24l-3 2z" fill="#3f78ae"/><circle cx="150" cy="21" r="8.500" fill="#f28a1e" stroke="#fbd9a8" stroke-width="1"/><path d="M147 16l8 5-8 5z" fill="#fff"/>
    <!-- IE -->
    <circle cx="214" cy="21" r="11" fill="none" stroke="#35b5f2" stroke-width="5.500"/><path d="M205 21h19" stroke="#35b5f2" stroke-width="4.500"/><path d="M216 27h12v8h-12z" fill="#1c1c1c"/><path d="M219 25h9" stroke="#1c1c1c" stroke-width="5"/>
    <path d="M199 33q-6-12 10-22 12-7 19-2-8-2-17 5-11 9-8 18z" fill="#f2c12a"/><path d="M222 8q8-3 7 5-2-5-7-5z" fill="#f2c12a"/>
    <!-- Excel -->
    <rect x="261" y="7" width="26" height="28" fill="#e8f2e6" stroke="#2f8a3c" stroke-width="1.500"/><path d="M263 9h16v18h-16z" fill="#3aa04a"/><path d="M266 12l10 13M276 12l-10 13" stroke="#fff" stroke-width="3"/><path d="M275 22l14 3-3 11-14-3z" fill="#f4f4f4" stroke="#bbb" stroke-width=".6"/><path d="M277 26l9 2M276.500 29l9 2" stroke="#7dbb80" stroke-width="1"/>
    <!-- Opera O -->
    <ellipse cx="338.700" cy="20.500" rx="12.500" ry="15" fill="#d8121c"/><ellipse cx="338.700" cy="20.500" rx="5" ry="10.500" fill="#a8a8a8"/><ellipse cx="335" cy="12" rx="5" ry="6" fill="#ff6a6a" opacity=".35"/>
    <!-- Word -->
    <rect x="386" y="7" width="26" height="28" fill="#e9eef8" stroke="#2a5db0" stroke-width="1.500"/><path d="M388 9h18v16h-18z" fill="#2b62c0"/><path d="M390 12l3 11 3.500-9 3.500 9 3-11" fill="none" stroke="#fff" stroke-width="2.400"/><path d="M400 22l14 3-3 11-14-3z" fill="#f4f4f4" stroke="#bbb" stroke-width=".6"/><path d="M402 26l9 2M401.500 29l9 2" stroke="#8aa6d8" stroke-width="1"/>
    <!-- Visual Studio -->
    <path d="M447 8l17 13-17 13z" fill="#7a4fc4"/><path d="M479 6l-15 15 15 15z" fill="#b39be0"/><path d="M479 6v30l-5-3V9z" fill="#d9cdf2"/>
    <!-- Chrome -->
    <circle cx="525" cy="21" r="14.500" fill="#e33b2e"/><path d="M525 21l-12.500 7.300A14.500 14.500 0 0 0 525 35.500l7-12z" fill="#2ba24c"/><path d="M512.500 28.300A14.500 14.500 0 0 1 512.400 13.800L525 21z" fill="#2ba24c"/><path d="M525 21l7.200 2.500-7.200 12A14.500 14.500 0 0 0 537.600 13.800z" fill="#fbc116"/><path d="M525 14.500h12.800" stroke="#e33b2e" stroke-width="0"/><circle cx="525" cy="21" r="6.600" fill="#f4f4f4"/><circle cx="525" cy="21" r="5.200" fill="#4a8af4"/>
    <!-- Live mail -->
    <path d="M574 8l22-3 3 5v22l-25 1z" fill="#f0a030"/><path d="M577 11l22-2v20l-22 2z" fill="#5fb85a"/><path d="M572 15h27v17h-27z" fill="#9fd0f4" stroke="#4a90c8" stroke-width=".8"/><path d="M577 19h16v9h-16z" fill="#f6f6f6"/><path d="M577 19l8 5 8-5" fill="none" stroke="#c9c9c9"/><rect x="589" y="20" width="3" height="2.500" fill="#e05030"/><path d="M570 34q14 5 34-2" fill="none" stroke="#f2b030" stroke-width="2.200"/>
    <!-- Origin -->
    <circle cx="648.700" cy="21" r="9" fill="none" stroke="#f0562a" stroke-width="6"/><path d="M652 9l-5.500-5q3 5 1.500 8zM645 33l5.500 5q-3-5-1.500-8z" fill="#f0562a"/>
    <!-- Steam -->
    <rect x="693" y="4" width="32" height="32" rx="2" fill="#222426"/><circle cx="714" cy="15" r="6.500" fill="none" stroke="#d8d8d8" stroke-width="2.400"/><circle cx="714" cy="15" r="2.600" fill="#d8d8d8"/><path d="M693 22l10 5" stroke="#d8d8d8" stroke-width="4"/><circle cx="704" cy="28" r="4" fill="#222426" stroke="#d8d8d8" stroke-width="2"/><path d="M707 25l4-5" stroke="#d8d8d8" stroke-width="3"/>
    <!-- AIMP -->
    <circle cx="774.700" cy="21" r="13.500" fill="#1a1a1a"/><circle cx="774.700" cy="21" r="11.500" fill="#f59a1c"/><path d="M774.700 12l8.500 15h-17z" fill="none" stroke="#1a1a1a" stroke-width="2.600"/><path d="M782 24l9 5-6 1-2 5z" fill="#fff" stroke="#222" stroke-width=".5"/>
    <!-- tray -->
    <text x="1150.500" y="21.800" font-size="11.800" fill="#d4d4d4" textLength="15.500" lengthAdjust="spacingAndGlyphs">RU</text>
    <g transform="translate(0,-2.300)"><path d="M1182.500 27l3.800-4.200 3.800 4.200z" fill="#e6e6e6"/>
    <rect x="1207" y="17" width="12" height="10" fill="#2a2a2a" stroke="#e4e4e4" stroke-width="1.400"/><path d="M1204 13v14h5M1202 15h5" fill="none" stroke="#e4e4e4" stroke-width="1.400"/><path d="M1209 30h8" stroke="#e4e4e4" stroke-width="1.400"/>
    <path d="M1226 22q4-7 14-6v12q-10 1-14-6z" fill="#6fae1a"/><path d="M1230 22q3-3 7-3M1230 23q3 3 7 2" fill="none" stroke="#2c4a08" stroke-width="1"/><path d="M1240 18v7M1240 27v2" stroke="#f4d020" stroke-width="2"/>
    <path d="M1251 19h3l5-4.500v15l-5-4.500h-3z" fill="#e8e8e8"/><path d="M1261 17.500q3 4.500 0 9M1264 15q5 7 0 14" fill="none" stroke="#d0d0d0" stroke-width="1.300"/></g>
    <text x="1298" y="16.300" font-size="11.800" fill="#f0f0f0" textLength="27.500" lengthAdjust="spacingAndGlyphs">22:48</text>
    <text x="1284.500" y="32.800" font-size="11.800" fill="#f0f0f0" textLength="54.500" lengthAdjust="spacingAndGlyphs">04.07.2013</text>
    <rect x="1351.500" y="1" width="14" height="38" fill="#2a2a2a" stroke="#6a6a6a" stroke-width="1"/>
  </svg>

</div>

</div>
</body>
</html>
